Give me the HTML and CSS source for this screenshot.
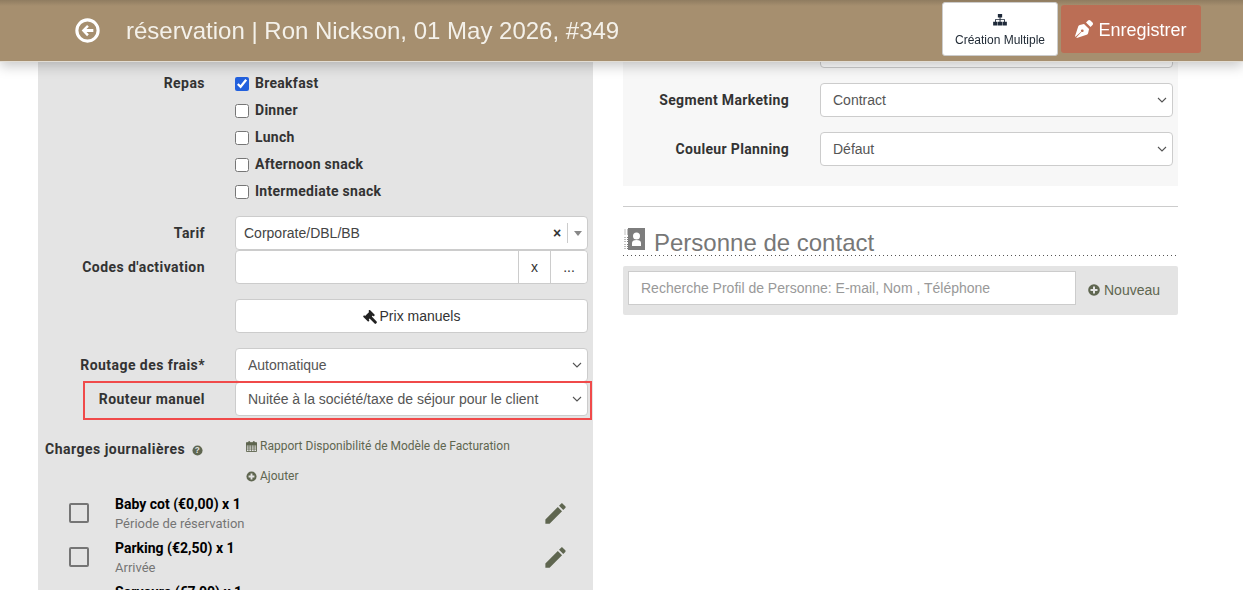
FILE: index.html
```html
<!DOCTYPE html>
<html lang="fr">
<head>
<meta charset="utf-8">
<title>réservation</title>
<link rel="stylesheet" href="styles.css">
</head>
<body>
<header class="topbar">
  <div class="topbar-title">
    <svg class="back-icon" viewBox="0 0 24 24"><circle cx="12" cy="12" r="10.2" fill="none" stroke="#fff" stroke-width="3"/><path d="M11.6 6.6 6.4 12l5.2 5.4 1.700-1.700-2.300-2.200h6.600v-3H11l2.300-2.200z" fill="#fff"/></svg>
    <h1>réservation | Ron Nickson, 01 May 2026, #349</h1>
  </div>
  <div class="topbar-actions">
    <button class="btn-multi" type="button">
      <svg class="sitemap" viewBox="0 0 16 14"><path d="M5.500 0h5v4H8.600v2h5.200v3H16v4.500h-5V9h1.800V7H8.600v2H10.500v4.500h-5V9h2V7H3.200v2H5v4.500H0V9h2.200V6h5.300V4h-2z" fill="#1f2a3a"/></svg>
      <span>Création Multiple</span>
    </button>
    <button class="btn-save" type="button">
      <svg class="nib" viewBox="0 0 512 512"><path d="M136.600 138.790a64 64 0 0 0-43.310 41.350L0 460l14.690 14.690L178 324A36 36 0 1 1 188 334L37.310 497.310 52 512l279.860-93.290a64 64 0 0 0 41.350-43.310L400 256 256 112zM498 74.170l-60.110-60.110c-18.750-18.750-49.160-18.750-67.910 0l-56.550 56.550 128.010 128.010 56.550-56.550c18.750-18.750 18.750-49.150 0-67.900z" fill="#fff"/></svg>
      <span>Enregistrer</span>
    </button>
  </div>
</header>

<main class="page">
  <section class="panel-left">
    <div class="row meals">
      <label class="label">Repas</label>
      <div class="checks">
        <label class="check"><input type="checkbox" checked>Breakfast</label>
        <label class="check"><input type="checkbox">Dinner</label>
        <label class="check"><input type="checkbox">Lunch</label>
        <label class="check"><input type="checkbox">Afternoon snack</label>
        <label class="check"><input type="checkbox">Intermediate snack</label>
      </div>
    </div>

    <div class="row tarif">
      <label class="label">Tarif</label>
      <div class="combo">
        <span class="combo-value">Corporate/DBL/BB</span>
        <span class="combo-clear">×</span>
        <span class="combo-arrow"></span>
      </div>
    </div>

    <div class="row codes">
      <label class="label">Codes d'activation</label>
      <div class="input-group">
        <input class="group-input" type="text">
        <button class="group-btn wide" type="button">x</button>
        <button class="group-btn" type="button">...</button>
      </div>
    </div>

    <div class="row manual">
      <span></span>
      <button class="btn-manual" type="button">
        <svg class="gavel" viewBox="0 0 16 16"><path d="M15.600 13.600 10.800 8.400l.9-.9.400.4c.3.3.8.300 1.100 0l.3-.3c.3-.3.300-.8 0-1.100L9.200 2.200c-.3-.3-.8-.3-1.100 0l-.3.300c-.3.3-.3.8 0 1.100l.3.300-4 4-.3-.3c-.3-.3-.8-.3-1.100 0l-.3.3c-.3.3-.3.800 0 1.100l4.300 4.300c.3.300.8.300 1.100 0l.3-.3c.3-.3.300-.8 0-1.100l-.4-.4.900-.9 5 5c.4.400 1 .4 1.400 0l.6-.6c.4-.3.4-1 0-1.400z" fill="#222"/></svg>
        <span>Prix manuels</span>
      </button>
    </div>

    <div class="row routing">
      <label class="label">Routage des frais*</label>
      <select class="select"><option>Automatique</option></select>
    </div>

    <div class="row router">
      <label class="label">Routeur manuel</label>
      <select class="select"><option>Nuitée à la société/taxe de séjour pour le client</option></select>
    </div>

    <div class="charges-head">
      <div class="charges-title">
        <span>Charges journalières</span>
        <svg class="help" viewBox="0 0 12 12"><circle cx="6" cy="6" r="5.500" fill="#5f6650"/><text x="6" y="9" text-anchor="middle" class="help-mark">?</text></svg>
      </div>
      <div class="charges-links">
        <a class="link">
          <svg class="mini" viewBox="0 0 12 12"><path d="M.5 2h11v9.500H.5z" fill="none" stroke="#5f6650"/><path d="M.5 2h11v2.500H.5zM3 .5h1v2H3zM8 .5h1v2H8zM.5 6.500h11M.5 8.800h11M3.200 4.500v7M6 4.500v7M8.800 4.500v7" stroke="#5f6650" stroke-width=".8" fill="#5f6650"/></svg>
          Rapport Disponibilité de Modèle de Facturation
        </a>
        <a class="link">
          <svg class="mini" viewBox="0 0 12 12"><circle cx="6" cy="6" r="5.500" fill="#5f6650"/><path d="M5 2.800h2V5h2.200v2H7v2.200H5V7H2.800V5H5z" fill="#e4e4e4"/></svg>
          Ajouter
        </a>
      </div>
    </div>

    <ul class="charges">
      <li class="charge">
        <span class="box"></span>
        <div class="charge-text"><b>Baby cot (€0,00) x 1</b><small>Période de réservation</small></div>
        <svg class="edit" viewBox="0 0 24 24"><path d="M3 17.250V21h3.750L17.810 9.940l-3.750-3.750L3 17.250zM20.710 7.040c.39-.39.39-1.020 0-1.410l-2.340-2.340c-.39-.39-1.020-.39-1.410 0l-1.830 1.830 3.750 3.750 1.830-1.830z"/></svg>
      </li>
      <li class="charge">
        <span class="box"></span>
        <div class="charge-text"><b>Parking (€2,50) x 1</b><small>Arrivée</small></div>
        <svg class="edit" viewBox="0 0 24 24"><path d="M3 17.250V21h3.750L17.810 9.940l-3.750-3.750L3 17.250zM20.710 7.040c.39-.39.39-1.020 0-1.410l-2.340-2.340c-.39-.39-1.020-.39-1.410 0l-1.830 1.830 3.750 3.750 1.830-1.830z"/></svg>
      </li>
      <li class="charge">
        <span class="box"></span>
        <div class="charge-text"><b>Serveurs (€7,00) x 1</b><small>Arrivée</small></div>
        <svg class="edit" viewBox="0 0 24 24"><path d="M3 17.250V21h3.750L17.810 9.940l-3.750-3.750L3 17.250zM20.710 7.040c.39-.39.39-1.020 0-1.410l-2.340-2.340c-.39-.39-1.020-.39-1.410 0l-1.830 1.830 3.750 3.750 1.830-1.830z"/></svg>
      </li>
    </ul>
  </section>

  <section class="col-right">
    <div class="panel-right">
      <div class="row-r">
        <label class="label-r">Source</label>
        <select class="select"><option>Direct</option></select>
      </div>
      <div class="row-r">
        <label class="label-r">Segment Marketing</label>
        <select class="select"><option>Contract</option></select>
      </div>
      <div class="row-r">
        <label class="label-r">Couleur Planning</label>
        <select class="select"><option>Défaut</option></select>
      </div>
    </div>
    <hr class="divider">
    <h2 class="contact-title">
      <svg class="book" viewBox="0 0 22 22"><path d="M4 0h17v22H4z" fill="#7d7d7d"/><path d="M1 1.500v5M3.500 1.500v5M1 9v5M3.500 9v5M1 16v5M3.500 16v5" stroke="#7d7d7d" stroke-width="1" stroke-dasharray="1 1" fill="none"/><circle cx="12.500" cy="8" r="3.500" fill="#fff"/><path d="M8 18v-3c0-2 1.500-3 4.500-3s4.500 1 4.500 3v3z" fill="#fff"/></svg>
      <span>Personne de contact</span>
    </h2>
    <div class="search-bar">
      <input class="search-input" type="text" placeholder="Recherche Profil de Personne: E-mail, Nom , Téléphone">
      <a class="new-link">
        <svg class="plus" viewBox="0 0 12 12"><circle cx="6" cy="6" r="5.800" fill="#5f6650"/><path d="M5 2.500h2V5h2.500v2H7v2.500H5V7H2.500V5H5z" fill="#e4e4e4"/></svg>
        Nouveau
      </a>
    </div>
  </section>
</main>
</body>
</html>
```
FILE: styles.css
```css
*, *::before, *::after { box-sizing: border-box; }
html, body { margin: 0; height: 100%; overflow: hidden; background: #fff; }
body { font-family: "Liberation Sans", Arial, sans-serif; font-size: 14px; color: #333; }

.topbar {
  position: fixed; top: 0; left: 0; right: 0; height: 62px; z-index: 10;
  display: flex; align-items: flex-start; justify-content: space-between;
  background: linear-gradient(#8f7c60 0, #a68f6f 6px);
  border-bottom: 1px solid #e2ddd4;
  box-shadow: 0 4px 12px rgba(0,0,0,.22);
}
.topbar-title { display: flex; align-items: center; height: 61px; padding-left: 75px; }
.back-icon { width: 25px; height: 25px; margin-right: 26px; margin-top: -1px; }
.topbar-title h1 { margin: 0; font-size: 24px; font-weight: 400; color: #f4f1ea; }
.topbar-actions { display: flex; gap: 3px; padding: 2px 42px 0 0; }
.btn-multi {
  width: 116px; height: 54px; padding: 0; display: flex; flex-direction: column; align-items: center;
  background: #fff; border: 1px solid #ccc; border-radius: 3px; color: #212b36;
  font: 12px "Liberation Sans", Arial, sans-serif;
}
.sitemap { width: 14px; height: 12px; margin: 11px 0 7px; }
.btn-save {
  width: 140px; height: 48px; margin-top: 3px; padding: 2px 0 0; display: flex; align-items: center; justify-content: center; gap: 5px;
  background: #bb6e55; border: 0; border-radius: 3px; color: #fff;
  font: 18px "Liberation Sans", Arial, sans-serif;
}
.nib { width: 18px; height: 18px; margin-top: -2px; }

.page { display: grid; grid-template-columns: 555px 555px; gap: 30px; padding-left: 38px; align-items: start; }

.panel-left { background: #e4e4e4; height: 640px; padding: 70px 5px 0 0; }
.row { display: grid; grid-template-columns: 167px 353px; column-gap: 30px; }
.label { text-align: right; font: 700 14px/1.4 Roboto, sans-serif; letter-spacing: .44px; color: #333; }
.meals { height: 146px; }
.checks { display: flex; flex-direction: column; gap: 7px; padding-top: 3px; }
.check { display: flex; align-items: center; height: 20px; font: 700 14px Roboto, sans-serif; letter-spacing: .28px; color: #333; }
.check input { width: 14px; height: 14px; margin: 1px 6px 0 0; accent-color: #2260dd; }
.meals .label { padding-top: 4px; }

.tarif { height: 34px; }
.tarif .label { line-height: 34px; }
.combo {
  height: 34px; display: flex; align-items: center; background: #fff; border: 1px solid #ccc; border-radius: 4px;
  padding-left: 8px; font-size: 14px; color: #444;
}
.combo-value { flex: 1; }
.combo-clear { font-weight: 700; font-size: 14px; color: #333; width: 14px; }
.combo-arrow {
  width: 20px; height: 20px; border-left: 1px solid #ccc; position: relative; margin-right: 0;
}
.combo-arrow::after {
  content: ""; position: absolute; left: 6px; top: 8px;
  border-style: solid; border-width: 5px 4px 0; border-color: #888 transparent transparent;
}

.codes { height: 49px; }
.codes .label { line-height: 34px; }
.input-group { display: flex; height: 34px; background: #fff; border: 1px solid #ccc; border-radius: 4px; }
.group-input { flex: 1; min-width: 0; border: 0; background: transparent; outline: none; }
.group-btn { background: #fff; border: 0; border-left: 1px solid #ccc; width: 37px; color: #333; font: 14px "Liberation Sans", Arial, sans-serif; padding: 0; border-radius: 0 4px 4px 0; }
.group-btn.wide { width: 32px; border-radius: 0; font-size: 14px; }

.manual { height: 49px; }
.btn-manual {
  height: 34px; padding: 0 2px 0 0; display: flex; align-items: center; justify-content: center; gap: 3px;
  background: #fff; border: 1px solid #ccc; border-radius: 4px; color: #333; font: 14px "Liberation Sans", Arial, sans-serif;
}
.gavel { width: 16px; height: 16px; }

.select {
  height: 34px; width: 100%; appearance: none; -webkit-appearance: none; background: #fff; border: 1px solid #ccc; border-radius: 4px;
  padding: 0 12px; font: 14px "Liberation Sans", Arial, sans-serif; color: #555;
  background-image: url("data:image/svg+xml,%3Csvg xmlns='http://www.w3.org/2000/svg' viewBox='0 0 10 6'%3E%3Cpath d='M1 1l4 4 4-4' fill='none' stroke='%23555' stroke-width='1.100'/%3E%3C/svg%3E");
  background-repeat: no-repeat; background-position: right 5px center; background-size: 10px 6px;
}
.routing { height: 34px; }
.routing .label, .router .label { line-height: 34px; }
.router { height: 34px; position: relative; }
.router::after {
  content: ""; position: absolute; left: 45px; top: -1px; width: 509px; height: 39px;
  border: 2px solid #f04a4a; pointer-events: none;
}

.charges-head { display: grid; grid-template-columns: 201px 1fr; padding: 22px 0 0 7px; height: 78px; }
.charges-title { display: flex; align-items: flex-start; gap: 7px; font: 700 14px/20px Roboto, sans-serif; letter-spacing: .5px; color: #333; padding-top: 1px; }
.help { width: 11px; height: 11px; margin-top: 6px; }
.help-mark { font: 700 9px "Liberation Sans", sans-serif; fill: #e4e4e4; }
.charges-links { display: flex; flex-direction: column; gap: 14px; padding-top: 0; }
.link { display: flex; align-items: center; gap: 3px; height: 16px; font: 12px Roboto, sans-serif; color: #5f6650; }
.mini { width: 11px; height: 11px; }

.charges { list-style: none; margin: 0; padding: 0 19px 0 31px; }
.charge { display: flex; align-items: flex-start; height: 44px; }
.box { width: 20px; height: 20px; border: 2px solid #757575; border-radius: 2px; margin-top: 9px; flex: none; }
.charge-text { flex: 1; padding-left: 26px; display: flex; flex-direction: column; }
.charge-text b { font: 700 14px/20px Roboto, sans-serif; color: #000; }
.charge-text small { font: 13px/20px Roboto, sans-serif; color: #757575; }
.edit { width: 27px; height: 27px; fill: #5f6650; margin-top: 6px; }

.panel-right { background: #f7f7f7; height: 186px; padding: 34px 5px 0 0; display: flex; flex-direction: column; gap: 15px; }
.row-r { display: grid; grid-template-columns: 166px 353px; column-gap: 31px; }
.label-r { text-align: right; font: 700 14px/34px Roboto, sans-serif; letter-spacing: .34px; color: #333; }
.divider { border: 0; border-top: 1px solid #ccc; margin: 20px 0 0; }
.contact-title {
  display: flex; align-items: flex-start; gap: 8px; margin: 21px 0 0; height: 28px; padding-left: 1px;
  background: repeating-linear-gradient(90deg, #555 0 1px, transparent 1px 4px) left bottom / 100% 1px no-repeat;
  font-size: 24px; font-weight: 400; color: #777; line-height: 29px;
}
.book { width: 22px; height: 22px; }
.search-bar { display: flex; align-items: flex-start; margin-top: 10px; height: 49px; padding: 5px; background: #e4e4e4; border-radius: 2px; }
.search-input { width: 448px; height: 34px; border: 1px solid #ccc; background: #fff; padding: 0 12px; font: 14px "Liberation Sans", Arial, sans-serif; }
.search-input::placeholder { color: #999; opacity: 1; }
.new-link { display: flex; align-items: center; gap: 4px; height: 34px; margin-left: 12px; margin-top: 2px; color: #5f6650; font-size: 14px; }
.plus { width: 12px; height: 12px; }
```
